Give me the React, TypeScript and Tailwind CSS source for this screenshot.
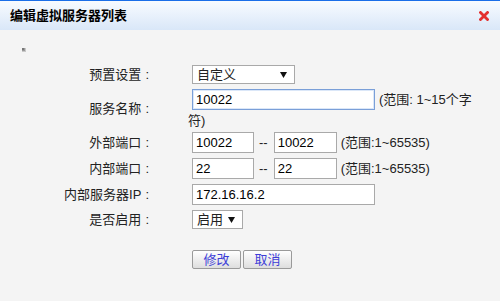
import React from "react";

const Tri = () => (
  <svg width="7" height="6" viewBox="0 0 7 6" className="block">
    <polygon points="0,0 7,0 3.5,6" fill="#111" />
  </svg>
);

const Label = ({ children }: { children: React.ReactNode }) => (
  <div className="text-right whitespace-nowrap">
    {children}
    <span className="ml-[4px]">:</span>
  </div>
);

const Input = ({ value, w, focused }: { value: string; w: string; focused?: boolean }) => (
  <div
    className={
      "shrink-0 h-[21px] bg-white flex items-center pl-[3px] text-black " +
      w +
      (focused
        ? " border border-[#7a9fd8] shadow-[inset_0_0_0_1px_#dbe7f8]"
        : " border border-[#a9a9a9]")
    }
  >
    {value}
  </div>
);

export default function App() {
  return (
    <div className="w-[500px] h-[301px] bg-[#f4f4f4] text-[13px] text-[#222] font-['Liberation_Sans','Noto_Sans_CJK_SC',sans-serif] overflow-hidden">
      <div className="h-[30px] border-t border-[#1a6ee8] bg-gradient-to-b from-[#f8fbff] to-[#d9e7f8] flex items-center justify-between pl-[10px] pr-[11px]">
        <div className="font-bold text-[13px] text-black">编辑虚拟服务器列表</div>
        <svg width="10" height="10" viewBox="0 0 10 10" className="block">
          <path d="M1.5 1.5 L8.5 8.5 M8.5 1.5 L1.5 8.5" stroke="#e3302f" strokeWidth="2.8" strokeLinecap="square" />
        </svg>
      </div>
      <div className="pt-[18px]">
        <div className="ml-[22px] w-[4px] h-[4px]">
          <svg width="4" height="4" viewBox="0 0 4 4" className="block">
            <rect x="0" y="0" width="4" height="4" fill="#c8c8c8" />
            <rect x="0" y="0" width="3" height="3" fill="#9a9a9a" />
            <rect x="0" y="0" width="2" height="2" fill="#777" />
          </svg>
        </div>
        <div className="mt-[13px] flex flex-col">
          <div className="grid grid-cols-[149px_277px] gap-x-[39px] items-center h-[19px]">
            <Label>预置设置</Label>
            <div className="ml-[4px] w-[103px] h-[19px] bg-white border border-[#a9a9a9] flex items-center justify-between pl-[4px] pr-[7px]">
              <span>自定义</span>
              <Tri />
            </div>
          </div>
          <div className="mt-[5px] grid grid-cols-[149px_277px] gap-x-[39px] items-center">
            <Label>服务名称</Label>
            <div>
              <div className="flex items-center ml-[4px]">
                <Input value="10022" w="w-[183px]" focused />
                <span className="ml-[4px] whitespace-nowrap shrink-0">(范围: 1~15个字</span>
              </div>
              <div className="mt-[3px] leading-[16px]">符)</div>
            </div>
          </div>
          <div className="mt-[3px] grid grid-cols-[149px_277px] gap-x-[39px] items-center">
            <Label>外部端口</Label>
            <div className="flex items-center ml-[4px]">
              <Input value="10022" w="w-[62px]" />
              <span className="ml-[5px] mr-[6px] shrink-0">--</span>
              <Input value="10022" w="w-[63px]" />
              <span className="ml-[4px] whitespace-nowrap shrink-0">(范围:1~65535)</span>
            </div>
          </div>
          <div className="mt-[5px] grid grid-cols-[149px_277px] gap-x-[39px] items-center">
            <Label>内部端口</Label>
            <div className="flex items-center ml-[4px]">
              <Input value="22" w="w-[62px]" />
              <span className="ml-[5px] mr-[6px] shrink-0">--</span>
              <Input value="22" w="w-[63px]" />
              <span className="ml-[4px] whitespace-nowrap shrink-0">(范围:1~65535)</span>
            </div>
          </div>
          <div className="mt-[5px] grid grid-cols-[149px_277px] gap-x-[39px] items-center">
            <Label>内部服务器IP</Label>
            <div className="flex items-center ml-[4px]">
              <Input value="172.16.16.2" w="w-[183px]" />
            </div>
          </div>
          <div className="mt-[5px] grid grid-cols-[149px_277px] gap-x-[39px] items-center h-[19px]">
            <Label>是否启用</Label>
            <div className="ml-[4px] w-[51px] h-[19px] bg-white border border-[#a9a9a9] flex items-center justify-between pl-[4px] pr-[7px]">
              <span>启用</span>
              <Tri />
            </div>
          </div>
          <div className="mt-[21px] ml-[192px] flex gap-[2px]">
            <button className="w-[49px] h-[19px] border border-[#9a9a9a] rounded-[2px] bg-gradient-to-b from-[#ffffff] to-[#dedede] text-[#3e3ed8] text-[13px] leading-none flex items-center justify-center">
              修改
            </button>
            <button className="w-[49px] h-[19px] border border-[#9a9a9a] rounded-[2px] bg-gradient-to-b from-[#ffffff] to-[#dedede] text-[#3e3ed8] text-[13px] leading-none flex items-center justify-center">
              取消
            </button>
          </div>
        </div>
      </div>
    </div>
  );
}
